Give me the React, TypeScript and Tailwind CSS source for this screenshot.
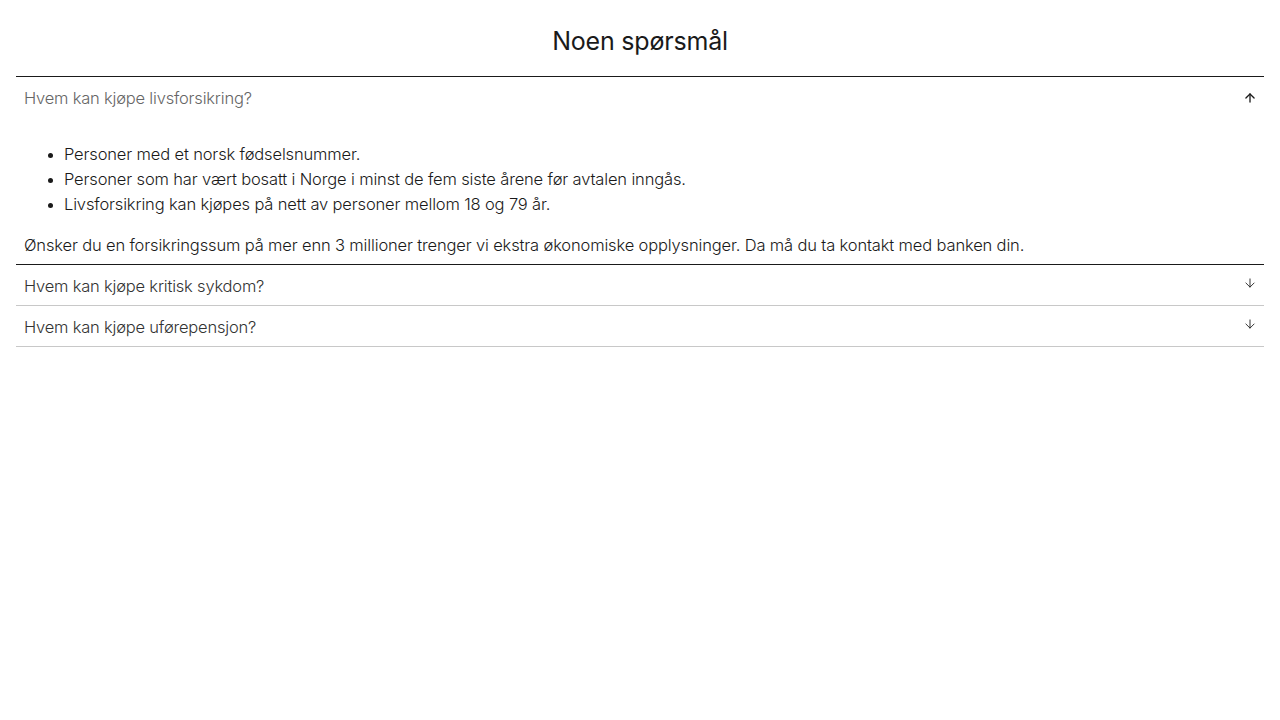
import { ArrowUp, ArrowDown } from 'lucide-react';

const faqs = [
  { q: 'Hvem kan kjøpe livsforsikring?', open: true },
  { q: 'Hvem kan kjøpe kritisk sykdom?', open: false },
  { q: 'Hvem kan kjøpe uførepensjon?', open: false },
];

export default function App() {
  return (
    <div className="min-h-screen bg-white px-4 font-['Inter',sans-serif] font-[350] text-[#1a1a1a]">
      <h1 className="pt-[24px] pb-[18px] text-center text-[25px] leading-[34px] font-normal text-[#1a1a1a] tracking-[-0.2px]">
        Noen spørsmål
      </h1>

      <div className="border-t border-[#1a1a1a]">
        {faqs.map((f) =>
          f.open ? (
            <div key={f.q} className="border-b border-[#1a1a1a]">
              <button className="flex w-full items-center justify-between px-2 pt-[10px] pb-[10px] text-left">
                <span className="text-[16.5px] leading-[22px] text-[#666666] tracking-[-0.2px]">{f.q}</span>
                <ArrowUp size={14} strokeWidth={2.25} className="mr-[-1px] text-[#1a1a1a]" />
              </button>
              <div className="px-2 pt-[23px] pb-[6px] text-[16.5px] tracking-[-0.15px]">
                <ul className="list-disc pl-10 leading-[25px] marker:text-[14px]">
                  <li>Personer med et norsk fødselsnummer.</li>
                  <li>Personer som har vært bosatt i Norge i minst de fem siste årene før avtalen inngås.</li>
                  <li>Livsforsikring kan kjøpes på nett av personer mellom 18 og 79 år.</li>
                </ul>
                <p className="mt-[16px] leading-[25px]">
                  Ønsker du en forsikringssum på mer enn 3 millioner trenger vi ekstra økonomiske opplysninger. Da må du ta kontakt med banken din.
                </p>
              </div>
            </div>
          ) : (
            <div key={f.q} className="border-b border-[#c8c8c8]">
              <button className="flex w-full items-start justify-between px-2 pt-[10px] pb-[8px] text-left">
                <span className="text-[16.5px] leading-[22px] text-[#333333] tracking-[-0.2px]">{f.q}</span>
                <ArrowDown size={14} strokeWidth={1.5} className="mr-[-1px] mt-[1px] text-[#1a1a1a]" />
              </button>
            </div>
          )
        )}
      </div>
    </div>
  );
}
